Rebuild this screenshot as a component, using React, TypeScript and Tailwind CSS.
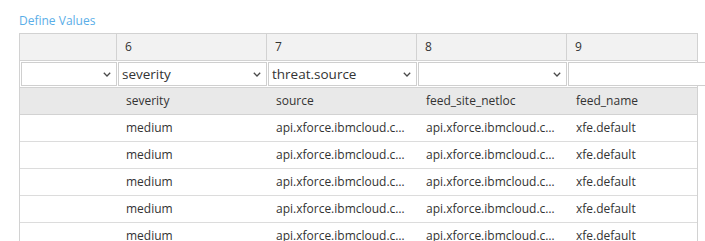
import React from "react";

const font = { fontFamily: '"Open Sans", "Noto Sans", sans-serif' };

function Chevron() {
  return (
    <svg width="8" height="5" viewBox="0 0 8 5" className="shrink-0">
      <polyline points="0.8,0.8 4,4 7.2,0.8" fill="none" stroke="#4a4a4a" strokeWidth="1.3" />
    </svg>
  );
}

function SelectBox({ value, w, chevron = true }: { value: string; w: string; chevron?: boolean }) {
  return (
    <div
      className={`${w} h-[24px] border border-[#cfcfcf] bg-white flex items-center pl-[3px] pr-[5px] text-[13.5px] text-[#333]`}
    >
      <span className="flex-1 truncate">{value}</span>
      {chevron && <Chevron />}
    </div>
  );
}

const rows = Array.from({ length: 5 });

export default function App() {
  return (
    <div className="w-[705px] h-[241px] overflow-hidden bg-white pt-[13px] pl-[19px]" style={font}>
      <div className="text-[12px] leading-[16px] text-[#5aaee8]">Define Values</div>
      <div className="mt-[4px] w-[679px] border-l border-r border-[#d2d2d2] text-[12px] text-[#333]">
        {/* number header */}
        <div className="flex h-[28px] border-t border-b border-[#d2d2d2] bg-[#f2f2f2]">
          <div className="w-[97px] border-r border-[#d2d2d2]" />
          <div className="w-[150px] border-r border-[#d2d2d2] pl-[8px] flex items-center">6</div>
          <div className="w-[150px] border-r border-[#d2d2d2] pl-[8px] flex items-center">7</div>
          <div className="w-[150px] border-r border-[#d2d2d2] pl-[8px] flex items-center">8</div>
          <div className="w-[130px] pl-[8px] flex items-center">9</div>
        </div>
        {/* select row */}
        <div className="flex h-[27px] border-b border-[#d2d2d2] bg-white">
          <div className="w-[97px] pl-[1px] pr-[1px] pt-[1px]">
            <SelectBox value="" w="w-[96px]" />
          </div>
          <div className="w-[150px] pl-[1px] pt-[1px]">
            <SelectBox value="severity" w="w-[149px]" />
          </div>
          <div className="w-[150px] pl-[1px] pt-[1px]">
            <SelectBox value="threat.source" w="w-[149px]" />
          </div>
          <div className="w-[150px] pl-[1px] pt-[1px]">
            <SelectBox value="" w="w-[149px]" />
          </div>
          <div className="w-[130px] pl-[1px] pt-[1px] relative z-10">
            <SelectBox value="" w="w-[149px]" chevron={false} />
          </div>
        </div>
        {/* column names */}
        <div className="flex h-[27px] border-b border-[#d2d2d2] bg-[#e9e9e9]">
          <div className="w-[97px]" />
          <div className="w-[150px] pl-[9px] flex items-center">severity</div>
          <div className="w-[150px] pl-[9px] flex items-center">source</div>
          <div className="w-[150px] pl-[9px] flex items-center">feed_site_netloc</div>
          <div className="w-[130px] pl-[9px] flex items-center">feed_name</div>
        </div>
        {rows.map((_, i) => (
          <div key={i} className="flex h-[27px] border-b border-[#dcdcdc] bg-white">
            <div className="w-[97px]" />
            <div className="w-[150px] pl-[9px] pr-[8px] flex items-center">
              <span className="truncate">medium</span>
            </div>
            <div className="w-[150px] pl-[9px] pr-[8px] flex items-center min-w-0">
              <span className="truncate">api.xforce.ibmcloud.com</span>
            </div>
            <div className="w-[150px] pl-[9px] pr-[8px] flex items-center min-w-0">
              <span className="truncate">api.xforce.ibmcloud.com</span>
            </div>
            <div className="w-[130px] pl-[9px] flex items-center">
              <span className="truncate">xfe.default</span>
            </div>
          </div>
        ))}
      </div>
    </div>
  );
}
